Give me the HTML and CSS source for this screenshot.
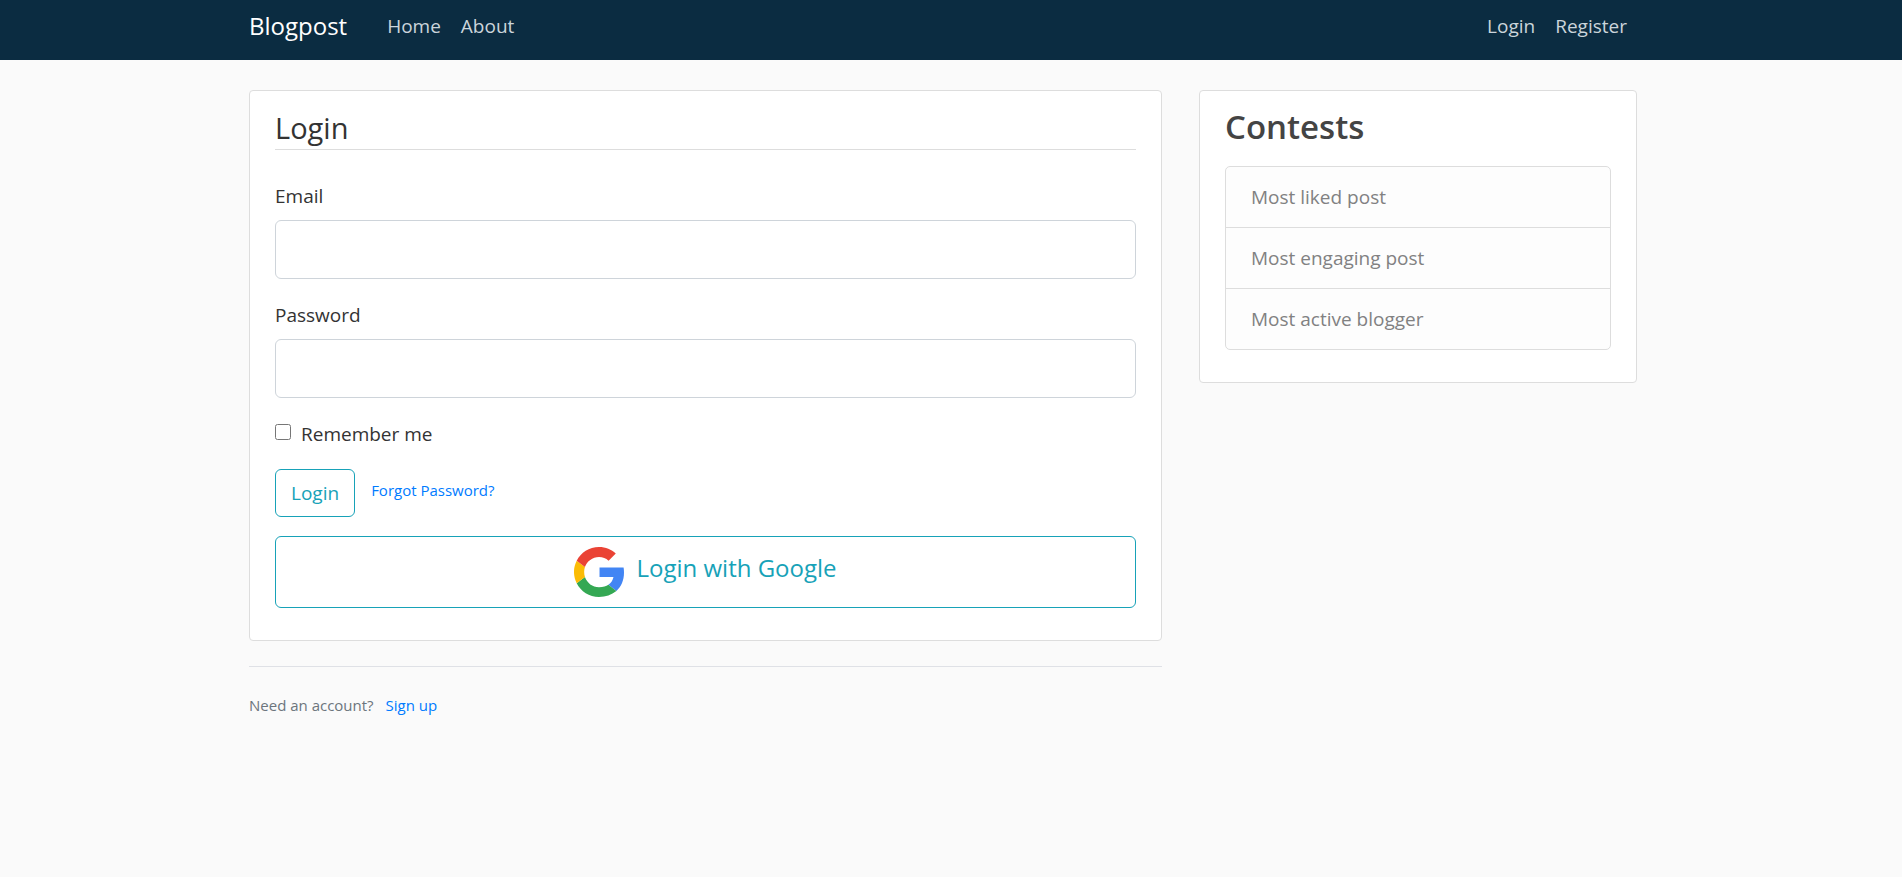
FILE: index.html
```html
<!DOCTYPE html>
<html lang="en">
<head>
<meta charset="utf-8">
<meta name="viewport" content="width=device-width, initial-scale=1">
<title>Blogpost - Login</title>
<link rel="stylesheet" href="styles.css">
</head>
<body>
<header class="site-header">
  <nav class="container navbar">
    <a class="brand" href="#">Blogpost</a>
    <a class="nav-link" href="#">Home</a>
    <a class="nav-link" href="#">About</a>
    <a class="nav-link nav-end" href="#">Login</a>
    <a class="nav-link" href="#">Register</a>
  </nav>
</header>
<div class="container columns">
  <main>
    <section class="card">
      <form>
        <h1 class="form-title">Login</h1>
        <div class="field">
          <label for="email">Email</label>
          <input class="text-input" type="email" id="email">
        </div>
        <div class="field">
          <label for="password">Password</label>
          <input class="text-input" type="password" id="password">
        </div>
        <div class="check">
          <input class="check-box" type="checkbox" id="remember">
          <label for="remember">Remember me</label>
        </div>
        <div class="actions">
          <button class="btn" type="submit">Login</button>
          <a class="link" href="#">Forgot Password?</a>
        </div>
        <button class="btn btn-google" type="button">
          <svg class="google-logo" viewBox="0 0 48 48" aria-hidden="true">
            <path fill="#4285f4" d="M48 19.6H24.5v9.3h13.4c-.6 3.1-2.300 5.700-4.900 7.400l7.700 6C45.200 38.200 48 32.100 48 24.500c0-1.700-.1-3.300-.4-4.900z"/>
            <path fill="#34a853" d="M24 48c6.500 0 12-2.100 16.700-5.700L33 36.300c-2.100 1.500-4.900 2.300-9 2.300-6.300 0-11.500-4.200-13.500-9.900l-7.900 6.100C6.500 42.600 14.600 48 24 48z"/>
            <path fill="#fbbc05" d="M10.500 28.700c-1-3.100-1-6.300 0-9.400l-7.900-6.100c-3.500 6.800-3.500 14.700 0 21.600z"/>
            <path fill="#ea4335" d="M24 9.500c3.600 0 6.700 1.200 9.200 3.600l6.900-6.800C35.900 2.400 30.500 0 24 0 14.600 0 6.500 5.400 2.600 13.200l7.900 6.100C12.500 13.600 17.700 9.500 24 9.500z"/>
          </svg>
          <span class="google-text">Login with Google</span>
        </button>
      </form>
    </section>
    <p class="signup">Need an account? <a class="link" href="#">Sign up</a></p>
  </main>
  <aside class="card">
    <h2 class="aside-title">Contests</h2>
    <ul class="list">
      <li>Most liked post</li>
      <li>Most engaging post</li>
      <li>Most active blogger</li>
    </ul>
  </aside>
</div>
</body>
</html>
```
FILE: styles.css
```css
* { box-sizing: border-box; }

body {
  margin: 0;
  background: #fafafa;
  color: #333;
  font: 19px/30px "Segoe UI", "Open Sans", sans-serif;
}

a { text-decoration: none; }
h1, h2, p, ul { margin: 0; padding: 0; }

.site-header {
  background: #0b2c41;
  padding-right: 15px;
}

.container {
  max-width: 1427px;
  margin: 0 auto;
  padding: 0 20px 0 19px;
}

.navbar {
  display: flex;
  align-items: center;
  height: 60px;
  padding-bottom: 8px;
}

.brand {
  margin-right: 30px;
  color: #fff;
  font-size: 24px;
}

.nav-link {
  padding: 0 10px;
  color: #cbd5db;
}

.nav-end { margin-left: auto; }

.columns {
  display: grid;
  grid-template-columns: 913fr 438fr;
  gap: 37px;
  align-items: start;
  max-width: 1442px;
  padding-top: 30px;
  padding-right: 35px;
}

.card {
  padding: 12px 25px 32px;
  border: 1px solid #ddd;
  border-radius: 4px;
  background: #fff;
}

.form-title {
  margin-bottom: 30px;
  padding-top: 4px;
  border-bottom: 1px solid #ddd;
  font-size: 29px;
  font-weight: 400;
  line-height: 42px;
}

.field { margin-bottom: 20px; }

.field label {
  display: block;
  margin-bottom: 9px;
  padding-top: 1px;
}

.text-input {
  display: block;
  width: 100%;
  height: 59px;
  padding: 10px 20px;
  border: 1px solid #ced4da;
  border-radius: 6px;
  background: #fff;
  font: inherit;
}

.check {
  display: flex;
  align-items: center;
  gap: 10px;
  margin-bottom: 20px;
  padding-top: 1px;
}

.check-box {
  width: 16px;
  height: 16px;
  margin: 0 0 4px;
}

.actions {
  display: flex;
  align-items: center;
  gap: 16px;
  margin-bottom: 19px;
}

.actions .link { padding-bottom: 6px; }

.btn {
  padding: 8px 15px;
  border: 1px solid #17a2b8;
  border-radius: 6px;
  background: transparent;
  color: #17a2b8;
  font: inherit;
}

.btn-google {
  display: flex;
  align-items: center;
  justify-content: center;
  gap: 12px;
  width: 100%;
  padding: 10px 15px;
  font-size: 24px;
}

.google-logo {
  width: 50px;
  height: 50px;
}

.google-text { padding-bottom: 8px; }

.link {
  color: #007bff;
  font-size: 15px;
}

.signup {
  margin-top: 25px;
  padding-top: 23px;
  border-top: 1px solid #dfe1e6;
  color: #6c757d;
  font-size: 15px;
}

.signup .link { margin-left: 8px; }

.aside-title {
  margin-bottom: 15px;
  color: #444;
  font-size: 33px;
  font-weight: 600;
  line-height: 48px;
}

.list {
  border: 1px solid #ddd;
  border-radius: 5px;
  background: #fdfdfd;
  color: #818182;
  list-style: none;
}

.list li { padding: 15px 25px; }
.list li + li { border-top: 1px solid #ddd; }
```
